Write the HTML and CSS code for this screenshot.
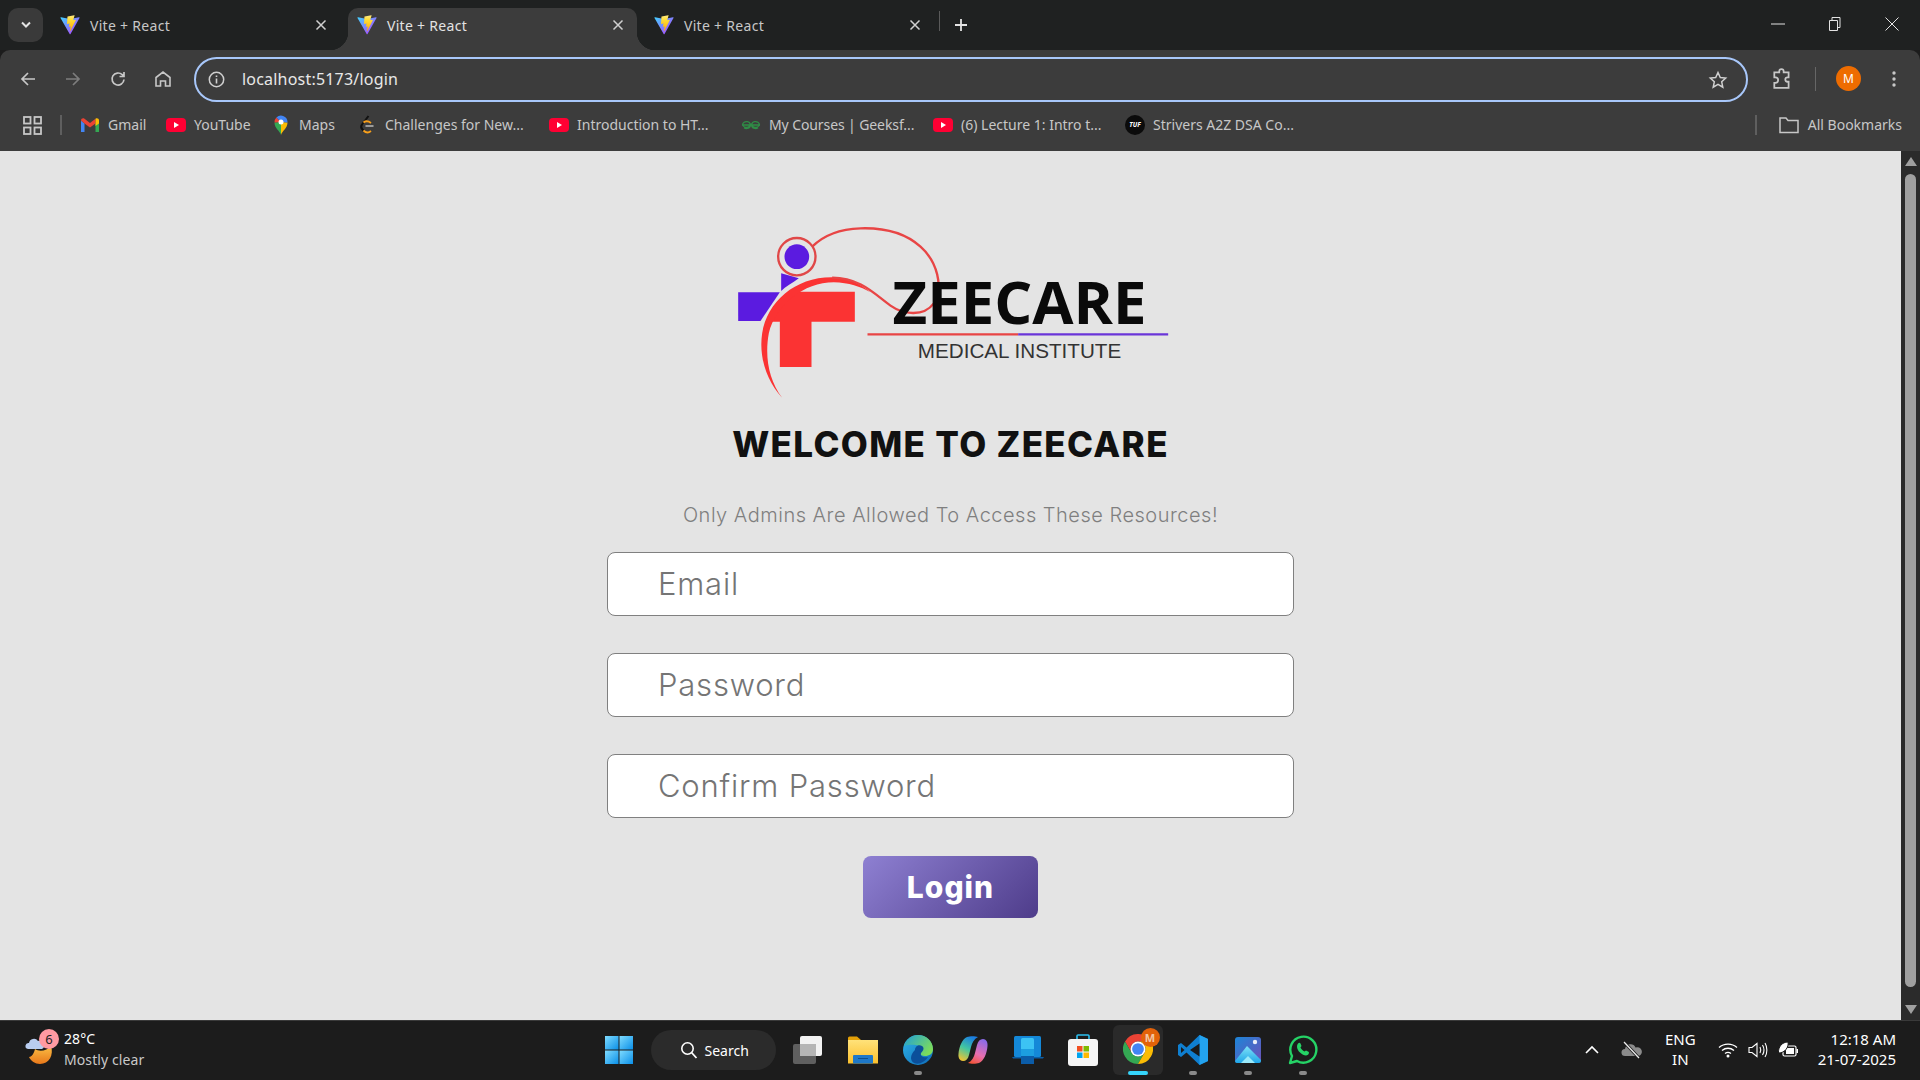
FILE: index.html
```html
<!DOCTYPE html>
<html>
<head>
  <title>Vite + React</title>
  <link rel="stylesheet" href="styles.css">
</head>
<body>
  <svg class="icon-defs" xmlns="http://www.w3.org/2000/svg">
    <defs>
      <linearGradient id="vitePurple" x1="0" y1="0" x2="1" y2="1"><stop offset="0" stop-color="#41d1ff"/><stop offset="1" stop-color="#bd34fe"/></linearGradient>
      <linearGradient id="viteYellow" x1="0" y1="0" x2="0" y2="1"><stop offset="0" stop-color="#ffea83"/><stop offset="0.3" stop-color="#ffdd35"/><stop offset="1" stop-color="#ffa800"/></linearGradient>
      <linearGradient id="startBlue" x1="0" y1="0" x2="1" y2="1"><stop offset="0" stop-color="#7fdcff"/><stop offset="1" stop-color="#0a8fe8"/></linearGradient>
      <linearGradient id="edgeBlue" x1="0" y1="0" x2="1" y2="1"><stop offset="0" stop-color="#2fb4e8"/><stop offset="1" stop-color="#0d6ab8"/></linearGradient>
      <linearGradient id="edgeGreen" x1="0" y1="0" x2="1" y2="0.6"><stop offset="0" stop-color="#1f9fd8"/><stop offset="1" stop-color="#7ddc5a"/></linearGradient>
      <linearGradient id="copilotA" x1="0.6" y1="0" x2="0.2" y2="1"><stop offset="0" stop-color="#1b7ee0"/><stop offset="0.5" stop-color="#43c7a0"/><stop offset="1" stop-color="#f4c330"/></linearGradient>
      <linearGradient id="copilotB" x1="0.7" y1="0" x2="0.3" y2="1"><stop offset="0" stop-color="#8b6be8"/><stop offset="0.6" stop-color="#e86fb0"/><stop offset="1" stop-color="#f2553d"/></linearGradient>
      <linearGradient id="photoBg" x1="0" y1="0" x2="1" y2="1"><stop offset="0" stop-color="#1c86d8"/><stop offset="1" stop-color="#7050b8"/></linearGradient>
      <linearGradient id="photoHill" x1="0" y1="0" x2="0" y2="1"><stop offset="0" stop-color="#7fe3f8"/><stop offset="1" stop-color="#1fa5e8"/></linearGradient>
      <linearGradient id="folderFill" x1="0" y1="0" x2="0" y2="1"><stop offset="0" stop-color="#ffe27a"/><stop offset="1" stop-color="#fbc02d"/></linearGradient>
      <linearGradient id="moonFill" x1="0" y1="0" x2="0" y2="1"><stop offset="0" stop-color="#fbbf45"/><stop offset="1" stop-color="#e8781a"/></linearGradient>
      <symbol id="vite" viewBox="0 0 410 404">
        <path fill="url(#vitePurple)" d="M399.641 59.5246L215.643 388.545C211.844 395.338 202.084 395.378 198.228 388.618L10.5817 59.5563C6.38087 52.1896 12.6802 43.2665 21.0281 44.7586L205.223 77.6824C206.398 77.8924 207.601 77.8904 208.776 77.6763L389.119 44.8058C397.439 43.2894 403.768 52.1434 399.641 59.5246Z"/>
        <path fill="url(#viteYellow)" d="M292.965 1.5744L156.801 28.2552C154.563 28.6937 152.906 30.5903 152.771 32.8664L144.395 174.33C144.198 177.662 147.258 180.248 150.51 179.498L188.42 170.749C191.967 169.931 195.172 173.055 194.443 176.622L183.18 231.775C182.422 235.487 185.907 238.661 189.532 237.56L212.947 230.446C216.577 229.344 220.065 232.527 219.297 236.242L201.398 322.875C200.278 328.294 207.486 331.249 210.492 326.603L212.5 323.5L323.454 102.072C325.312 98.3645 322.108 94.137 318.036 94.9228L279.014 102.454C275.347 103.161 272.227 99.746 273.262 96.1583L298.731 7.86689C299.767 4.27314 296.636 0.855181 292.965 1.5744Z"/>
      </symbol>
      <symbol id="close" viewBox="0 0 12 12"><path d="M1.5 1.5l9 9M10.5 1.5l-9 9" fill="none" stroke="currentColor" stroke-width="1.5"/></symbol>
      <symbol id="youtube" viewBox="0 0 20 20"><rect y="3" width="20" height="14" rx="4" fill="#ff0033"/><path d="M8 7l5 3-5 3z" fill="#fff"/></symbol>
    </defs>
  </svg>

  <div class="app">
    <div class="tabstrip">
      <button class="tab-search">
        <svg width="12" height="8" viewBox="0 0 12 8"><path d="M2 1.5l4 4 4-4" fill="none" stroke="#e3e3e3" stroke-width="2"/></svg>
      </button>
      <div class="tab">
        <svg class="favicon"><use href="#vite"/></svg>
        <span class="tab-title">Vite + React</span>
        <svg class="tab-close"><use href="#close"/></svg>
      </div>
      <div class="tab active">
        <svg class="favicon"><use href="#vite"/></svg>
        <span class="tab-title">Vite + React</span>
        <svg class="tab-close"><use href="#close"/></svg>
      </div>
      <div class="tab last">
        <svg class="favicon"><use href="#vite"/></svg>
        <span class="tab-title">Vite + React</span>
        <svg class="tab-close"><use href="#close"/></svg>
      </div>
      <div class="new-tab">
        <svg width="14" height="14" viewBox="0 0 14 14"><path d="M7 1v12M1 7h12" stroke="#e3e3e3" stroke-width="1.8"/></svg>
      </div>
      <div class="window-controls">
        <div class="win-btn"><svg width="14" height="14" viewBox="0 0 14 14"><path d="M0 7h14" stroke="#e3e3e3"/></svg></div>
        <div class="win-btn"><svg width="14" height="16" viewBox="0 0 14 16"><path d="M1.5 4.5h8v10h-8zM4 4.5V1.5h8v10h-2.5" fill="none" stroke="#e3e3e3"/></svg></div>
        <div class="win-btn"><svg width="14" height="14" viewBox="0 0 14 14"><path d="M.5.5l13 13M13.5.5l-13 13" stroke="#e3e3e3"/></svg></div>
      </div>
    </div>

    <div class="toolbar">
      <div class="nav-btn"><svg width="18" height="18" viewBox="0 0 18 18"><path d="M16 9H3M9 3L3 9l6 6" fill="none" stroke="#c7c7c7" stroke-width="1.7"/></svg></div>
      <div class="nav-btn"><svg width="18" height="18" viewBox="0 0 18 18"><path d="M2 9h13M9 3l6 6-6 6" fill="none" stroke="#7d7d7d" stroke-width="1.7"/></svg></div>
      <div class="nav-btn"><svg width="18" height="18" viewBox="0 0 18 18"><path d="M15 9.5A6 6 0 1 1 13.2 4.7L15 6.5M15 2v4.5h-4.5" fill="none" stroke="#c7c7c7" stroke-width="1.7"/></svg></div>
      <div class="nav-btn"><svg width="18" height="18" viewBox="0 0 18 18"><path d="M2 16V7.5L9 2l7 5.5V16h-4.5v-5h-5v5z" fill="none" stroke="#c7c7c7" stroke-width="1.6"/></svg></div>
      <div class="omnibox">
        <svg class="omni-info" width="17" height="17" viewBox="0 0 17 17"><circle cx="8.5" cy="8.5" r="7.2" fill="none" stroke="#d0d0d0" stroke-width="1.5"/><path d="M8.5 7.5v5M8.5 4.5v1.6" stroke="#d0d0d0" stroke-width="1.6"/></svg>
        <span class="omni-url">localhost:5173/login</span>
        <svg width="20" height="20" viewBox="0 0 20 20"><path d="M10 2.5l2.3 5 5.4.6-4 3.7 1.1 5.4-4.8-2.8-4.8 2.8 1.1-5.4-4-3.7 5.4-.6z" fill="none" stroke="#d0d0d0" stroke-width="1.5"/></svg>
      </div>
      <div class="toolbar-right">
        <svg class="ext-icon" width="22" height="22" viewBox="0 0 20 20"><path d="M3 4h4.500V3a2 2 0 0 1 4 0v1H16v4.500h-1a2 2 0 0 0 0 4h1V18H3v-4.500h1a2.500 2.500 0 0 0 0-5H3z" fill="none" stroke="#c7c7c7" stroke-width="1.6"/></svg>
        <span class="toolbar-sep"></span>
        <span class="avatar">M</span>
        <svg class="menu-icon" width="4" height="18" viewBox="0 0 4 18"><circle cx="2" cy="3" r="1.7" fill="#c7c7c7"/><circle cx="2" cy="9" r="1.7" fill="#c7c7c7"/><circle cx="2" cy="15" r="1.7" fill="#c7c7c7"/></svg>
      </div>
    </div>

    <div class="bookmarks">
      <svg class="apps-icon" width="19" height="19" viewBox="0 0 19 19"><g fill="none" stroke="#c7c7c7" stroke-width="1.8"><rect x="1" y="1" width="6.5" height="6.5"/><rect x="11.5" y="1" width="6.5" height="6.5"/><rect x="1" y="11.5" width="6.5" height="6.5"/><rect x="11.5" y="11.5" width="6.5" height="6.5"/></g></svg>
      <span class="bookmark-sep"></span>
      <div class="bookmark gmail">
        <svg class="bm-icon" viewBox="0 0 20 20"><path d="M1 5.5V17h3.500V8.500z" fill="#4285f4"/><path d="M19 5.5V17h-3.500V8.500z" fill="#34a853"/><path d="M1 5.500C1 3.500 3 2.600 4.500 3.700L10 8l5.500-4.300L15.500 8.500 10 12.500 4.500 8.500z" fill="#ea4335"/><path d="M15.500 3.700C17 2.600 19 3.500 19 5.500v3l-3.500 2.500z" fill="#fbbc04"/></svg>
        <span>Gmail</span>
      </div>
      <div class="bookmark yt">
        <svg class="bm-icon"><use href="#youtube"/></svg>
        <span>YouTube</span>
      </div>
      <div class="bookmark maps">
        <svg class="bm-icon maps-icon" viewBox="3 0 14 20"><path d="M10 20c-1-4-6.500-6.500-6.500-12.500L10 7z" fill="#34a853"/><path d="M10 20c1-4 6.500-6.500 6.500-12.500L10 7z" fill="#fbbc04"/><path d="M3.500 7.500A6.500 6.500 0 0 1 5.400 2.500L10 7z" fill="#ea4335"/><path d="M5.400 2.500A6.500 6.500 0 0 1 16.500 7.500L10 7z" fill="#4285f4"/><circle cx="10" cy="7" r="2.500" fill="#fff"/></svg>
        <span>Maps</span>
      </div>
      <div class="bookmark long">
        <svg class="bm-icon" viewBox="0 0 20 20"><path d="M11.500 1L5 9.500c-1.200 1.600-1 3.500.5 5l1 1" fill="none" stroke="#111" stroke-width="2"/><path d="M6.500 15.500c2 2 5 2.500 7.500.5M6.500 7.500c2-1.500 5-1.500 7.500.5" fill="none" stroke="#f89f1b" stroke-width="1.8"/><path d="M8.500 11h8" stroke="#b3b3b3" stroke-width="1.6"/></svg>
        <span>Challenges for New...</span>
      </div>
      <div class="bookmark long">
        <svg class="bm-icon"><use href="#youtube"/></svg>
        <span>Introduction to HT...</span>
      </div>
      <div class="bookmark long">
        <svg class="bm-icon" viewBox="0 0 20 20"><path d="M1 10h18M1.500 10a4 3.500 0 1 1 1.500 2.800M18.500 10a4 3.500 0 1 0-1.500 2.800M1.800 10.500a4 3.500 0 0 0 7 0M18.200 10.500a4 3.500 0 0 1-7 0" fill="none" stroke="#2f8d46" stroke-width="1.3"/></svg>
        <span class="tight">My Courses | Geeksf...</span>
      </div>
      <div class="bookmark long">
        <svg class="bm-icon"><use href="#youtube"/></svg>
        <span>(6) Lecture 1: Intro t...</span>
      </div>
      <div class="bookmark long">
        <svg class="bm-icon" viewBox="0 0 20 20"><circle cx="10" cy="10" r="10" fill="#0b0b0b"/><text x="10" y="12" class="tuf-text">TUF</text></svg>
        <span>Strivers A2Z DSA Co...</span>
      </div>
      <div class="bookmarks-end">
        <span class="bookmark-sep"></span>
        <svg class="folder-icon" width="20" height="18" viewBox="0 0 20 18"><path d="M1 2h6l2 2.500h10V16.500H1z" fill="none" stroke="#c7c7c7" stroke-width="1.5"/></svg>
        <span>All Bookmarks</span>
      </div>
    </div>

    <div class="viewport">
      <div class="page">
        <svg class="logo" viewBox="-28.5 0 1440 600">
          <path class="logo-purple" d="M53 232H178L120 318H53z"/>
          <path class="logo-purple" d="M182 175L235 190C215 205 195 215 182 228z"/>
          <path class="logo-redfill" d="M235 230H403V320H273V456H178V320H150C160 290 190 250 235 230z"/>
          <path class="logo-redfill" d="M185 548C135 495 115 420 125 355C140 260 225 186 335 187C385 188 420 208 450 232C420 215 385 203 340 202C250 202 165 270 145 355C132 425 145 495 185 548z"/>
          <path class="logo-line" d="M335 188C420 188 465 240 510 272C550 300 610 305 640 265C670 215 650 140 600 95C550 50 480 38 420 40C360 42 310 60 275 95"/>
          <circle class="logo-ring" cx="229" cy="125" r="56"/>
          <circle class="logo-purple" cx="229" cy="125" r="37"/>
          <text class="logo-name" x="516" y="328" textLength="762" lengthAdjust="spacingAndGlyphs">ZEECARE</text>
          <path class="logo-rule-red" d="M441 358H893"/>
          <path class="logo-rule-purple" d="M893 358H1343"/>
          <text class="logo-sub" x="592" y="430" textLength="610" lengthAdjust="spacingAndGlyphs">MEDICAL INSTITUTE</text>
        </svg>
        <h1 class="welcome">WELCOME TO ZEECARE</h1>
        <p class="notice">Only Admins Are Allowed To Access These Resources!</p>
        <form class="login-form">
          <input class="field" type="text" placeholder="Email">
          <input class="field" type="password" placeholder="Password">
          <input class="field" type="password" placeholder="Confirm Password">
          <button class="login-btn" type="button">Login</button>
        </form>
      </div>
      <div class="scrollbar">
        <span class="arrow-up"></span>
        <span class="thumb"></span>
        <span class="arrow-down"></span>
      </div>
    </div>

    <div class="taskbar">
      <div class="weather">
        <div class="weather-icon">
          <svg width="32" height="36" viewBox="0 0 32 36"><path d="M10 18c4 3 12 2 16-3 3 9-2 18-11 18-5 0-9-3-11-7 3 0 5-4 6-8z" fill="url(#moonFill)"/><path d="M3 18a3 3 0 0 1 1-6 5 5 0 0 1 9-2 4 4 0 0 1 4 8z" fill="#b9cdf0"/></svg>
          <span class="weather-badge">6</span>
        </div>
        <div class="weather-text">
          <span class="temp">28°C</span>
          <span class="cond">Mostly clear</span>
        </div>
      </div>

      <div class="task-center">
        <div class="task-item">
          <svg width="30" height="30" viewBox="0 0 30 30"><rect x="1" y="1" width="13.5" height="13.5" fill="url(#startBlue)"/><rect x="15.5" y="1" width="13.5" height="13.5" fill="url(#startBlue)"/><rect x="1" y="15.5" width="13.5" height="13.5" fill="url(#startBlue)"/><rect x="15.5" y="15.5" width="13.5" height="13.5" fill="url(#startBlue)"/></svg>
        </div>
        <div class="task-search">
          <svg width="18" height="18" viewBox="0 0 18 18"><circle cx="7.5" cy="7.5" r="5.7" fill="none" stroke="#fff" stroke-width="1.6"/><path d="M11.5 11.5l5 5.5" stroke="#fff" stroke-width="1.8"/></svg>
          <span>Search</span>
        </div>
        <div class="task-item">
          <svg width="32" height="30" viewBox="0 0 32 30"><rect x="1" y="9" width="23" height="20" rx="2" fill="#5f5f5f"/><rect x="8" y="1" width="22" height="20" rx="2" fill="#f2f2f2"/><rect x="8" y="9" width="16" height="12" fill="#b5b5b5"/></svg>
        </div>
        <div class="task-item">
          <svg width="30" height="28" viewBox="0 0 30 28"><path d="M0 2a1.5 1.5 0 0 1 1.5-1.5H9L13 4h-13z" fill="#e3a008"/><path d="M0 4h30v23.500H0z" fill="url(#folderFill)"/><rect x="5" y="19" width="20" height="8.5" rx="1" fill="#1e78c8"/><path d="M10 22.500h10" stroke="#0c4f8f"/></svg>
        </div>
        <div class="task-item has-dot">
          <svg width="30" height="30" viewBox="0 0 30 30"><circle cx="15" cy="15" r="15" fill="url(#edgeBlue)"/><path d="M1 11C3 4 9 0 15 0c8 0 15 6 15 14 0 5-4 7-8 7-3 0-5-1-5-3 2-2 3-5-1-7-5-2-11-1-15 0z" fill="url(#edgeGreen)"/><path d="M12 15c0-3 3-6 7-4 3 2 1 5-1 7-1 3 2 5 7 4-3 5-9 8-14 6-5-3-3-9 1-13z" fill="#0b4f9a"/></svg>
          <span class="task-dot"></span>
        </div>
        <div class="task-item">
          <svg width="30" height="28" viewBox="0 0 30 28"><path d="M9 1C12 0 17 0 20 1C16 3 14 7 13 11L11 19C10 23 8 25 5 25C2 25 0 22 .5 18C1 11 4 3 9 1z" fill="url(#copilotA)"/><path d="M21 27C18 28 13 28 10 27C14 25 16 21 17 17L19 9C20 5 22 3 25 3C28 3 30 6 29.5 10C29 17 26 25 21 27z" fill="url(#copilotB)"/></svg>
        </div>
        <div class="task-item">
          <svg width="32" height="28" viewBox="0 0 32 28"><rect x="2" y="0" width="27" height="21" rx="1.5" fill="#1488d8"/><path d="M0 21h32l-1 1.500H1z" fill="#0a5ea8"/><rect x="9" y="2" width="13" height="26" rx="1.5" fill="#3cc3f4"/><rect x="9" y="13" width="13" height="7" fill="#1c9ee0"/><rect x="9" y="20" width="13" height="8" fill="#0b5ca8"/></svg>
        </div>
        <div class="task-item">
          <svg width="30" height="32" viewBox="0 0 30 32"><path d="M9 5V2a1 1 0 0 1 1-1h10a1 1 0 0 1 1 1v3" fill="none" stroke="#2cc0f0" stroke-width="1.6"/><rect y="5" width="30" height="27" rx="3" fill="#f5f5f5"/><rect x="9" y="12" width="5.5" height="5.5" fill="#f25022"/><rect x="15.5" y="12" width="5.5" height="5.5" fill="#7fba00"/><rect x="9" y="18.5" width="5.5" height="5.5" fill="#00a4ef"/><rect x="15.5" y="18.5" width="5.5" height="5.5" fill="#ffb900"/></svg>
        </div>
        <div class="task-item current has-dot">
          <div class="chrome-wrap">
            <svg width="30" height="30" viewBox="1 1 22 22"><path d="M21.530 6.500H12A5.500 5.500 0 0 0 7.240 14.750L2.470 6.500A11 11 0 0 1 21.530 6.500z" fill="#ea4335"/><path d="M2.470 6.500L7.240 14.750A5.500 5.500 0 0 0 16.760 14.750L12 23A11 11 0 0 1 2.470 6.500z" fill="#34a853"/><path d="M12 23L16.760 14.750A5.500 5.500 0 0 0 12 6.500H21.530A11 11 0 0 1 12 23z" fill="#fbbc04"/><circle cx="12" cy="12" r="5.5" fill="#fff"/><circle cx="12" cy="12" r="4.3" fill="#4285f4"/></svg>
            <span class="chrome-badge">M</span>
          </div>
          <span class="task-dot"></span>
        </div>
        <div class="task-item has-dot">
          <svg width="30" height="30" viewBox="0 0 30 30"><path d="M21.500 0L30 4v22l-8.500 4-13-12.500L3 22 0 20V10l3-2 5.500 4.500z" fill="#0f7fd0"/><path d="M21.500 0L30 4v22l-8.500 4z" fill="#23a3ef"/><path d="M21.500 8.500L12 15l9.500 6.500z" fill="#1a1a1a"/><path d="M3 12l3.500 3L3 18z" fill="#1a1a1a"/></svg>
          <span class="task-dot"></span>
        </div>
        <div class="task-item has-dot">
          <svg width="26" height="26" viewBox="0 0 26 26"><rect width="26" height="26" rx="3" fill="url(#photoBg)"/><path d="M0 24L12 9l14 14v1a2 2 0 0 1-2 2H2a2 2 0 0 1-2-2z" fill="url(#photoHill)"/><path d="M6 26l7-7 7 7z" fill="#9aeafa"/><circle cx="20" cy="5" r="2.2" fill="#e8eef8"/></svg>
          <span class="task-dot"></span>
        </div>
        <div class="task-item has-dot">
          <svg width="30" height="30" viewBox="0 0 30 30"><path d="M2 28l2-7A13 13 0 1 1 9 26z" fill="none" stroke="#25d366" stroke-width="2.4" stroke-linejoin="round"/><path d="M10 8.500c1-1 2-1 2.500 0l1 2.500-1 1.500c.8 1.800 2.200 3 4 4l1.500-1 2.500 1.200c.8.500.5 2-.5 3-2 1.500-5 .5-8-2.200-3-2.800-3.800-6.500-2-9z" fill="#25d366"/></svg>
          <span class="task-dot"></span>
        </div>
      </div>

      <div class="tray">
        <svg class="tray-chevron" width="16" height="10" viewBox="0 0 16 10"><path d="M2 8l6-6 6 6" fill="none" stroke="#fff" stroke-width="1.6"/></svg>
        <svg class="tray-cloud" width="22" height="18" viewBox="0 0 22 18"><path d="M4 15a3.500 3.500 0 0 1 0-7 5.500 5.500 0 0 1 10.500-1.500A4.300 4.300 0 0 1 18 15z" fill="#8b8b8b"/><path d="M3 1l15 16" stroke="#1c1c1c" stroke-width="3"/><path d="M3 1l15 16" stroke="#eee" stroke-width="1.2"/></svg>
        <div class="tray-lang"><span>ENG</span><span>IN</span></div>
        <svg class="tray-wifi" width="20" height="16" viewBox="0 0 20 16"><path d="M1 5.500c5-4.500 13-4.500 18 0M4 8.500c3.500-3 8.500-3 12 0M7 11.500c2-1.500 4-1.500 6 0" fill="none" stroke="#fff" stroke-width="1.3"/><circle cx="10" cy="14" r="1.5" fill="#fff"/></svg>
        <svg class="tray-sound" width="20" height="16" viewBox="0 0 20 16"><path d="M1 5.500h3L9 1.500v13L4 10.500H1z" fill="none" stroke="#fff" stroke-width="1.1"/><path d="M12 5c1 2 1 4 0 6M14.500 3c1.800 3 1.800 7 0 10M17 1c2.500 4 2.500 10 0 14" fill="none" stroke="#fff" stroke-width="1.1"/></svg>
        <svg class="tray-battery" width="20" height="16" viewBox="0 0 20 16"><rect x="5" y="4" width="13" height="10" rx="1.5" fill="none" stroke="#fff" stroke-width="1.2"/><rect x="8" y="6" width="8" height="6" fill="#fff"/><path d="M18.500 7H20v4h-1.500z" fill="#fff"/><path d="M.5 11C0 5 4 0 10 0c1 5-3 11-9.500 11z" fill="#fff" stroke="#1c1c1c"/></svg>
        <div class="tray-clock"><span>12:18 AM</span><span>21-07-2025</span></div>
      </div>
    </div>
  </div>
</body>
</html>
```

FILE: styles.css
```css
* {
  box-sizing: border-box;
}

html, body {
  margin: 0;
  height: 100%;
  overflow: hidden;
}

body {
  font-family: "Noto Sans", "Open Sans", sans-serif;
  background-color: #1c1c1c;
}

.icon-defs {
  display: block;
  width: 0;
  height: 0;
}

.app {
  display: flex;
  flex-direction: column;
  height: 1080px;
}

/* browser tabs */
.tabstrip {
  display: flex;
  align-items: flex-end;
  height: 50px;
  padding-left: 8px;
  background-color: #1f2121;
}

.tab-search {
  display: flex;
  align-items: center;
  justify-content: center;
  align-self: flex-start;
  width: 35px;
  height: 34px;
  margin-top: 8px;
  margin-right: 8px;
  padding: 0;
  border: none;
  border-radius: 10px;
  background-color: #3a3a3a;
}

.tab {
  position: relative;
  display: flex;
  align-items: center;
  flex: none;
  width: 297px;
  height: 42px;
  padding: 0 21px 8px 9px;
  color: #c7c7c7;
  font-size: 14px;
  letter-spacing: .3px;
}

.tab.active {
  width: 289px;
  margin-right: 8px;
  padding-right: 13px;
  color: #e3e3e3;
  background-color: #3c3c3c;
  border-radius: 10px 10px 0 0;
}

.tab.active::before,
.tab.active::after {
  content: "";
  position: absolute;
  bottom: 0;
  width: 18px;
  height: 18px;
}

.tab.active::before {
  left: -18px;
  background: radial-gradient(circle at 0 0, transparent 18px, #3c3c3c 18.5px);
}

.tab.active::after {
  right: -18px;
  background: radial-gradient(circle at 100% 0, transparent 18px, #3c3c3c 18.5px);
}

.tab.last::after {
  content: "";
  position: absolute;
  right: 2px;
  top: 3px;
  width: 1px;
  height: 20px;
  background-color: #5a5a5a;
}

.favicon {
  flex: none;
  width: 20px;
  height: 20px;
  margin-right: 10px;
}

.tab-title {
  flex: 1;
}

.tab-close {
  flex: none;
  width: 12px;
  height: 12px;
  color: #d0d0d0;
}

.new-tab {
  display: flex;
  align-items: center;
  justify-content: center;
  width: 28px;
  height: 42px;
  padding-bottom: 8px;
  margin-left: 5px;
}

.window-controls {
  display: flex;
  align-self: flex-start;
  margin-left: auto;
}

.win-btn {
  display: flex;
  align-items: center;
  justify-content: center;
  width: 57px;
  height: 48px;
}

/* address bar */
.toolbar {
  display: flex;
  align-items: flex-start;
  height: 57px;
  padding: 7px 0 0 5px;
  background-color: #3c3c3c;
  border-radius: 10px 10px 0 0;
}

.nav-btn {
  display: flex;
  align-items: center;
  justify-content: center;
  width: 45px;
  height: 43px;
}

.omnibox {
  display: flex;
  align-items: center;
  width: 1554px;
  height: 45px;
  margin-left: 9px;
  padding: 0 18px 0 12px;
  border: 2.5px solid #a8c7fa;
  border-radius: 23px;
}

.omni-info {
  margin-right: 17px;
}

.omni-url {
  flex: 1;
  padding-bottom: 1px;
  color: #e8e8e8;
  font-size: 16px;
  letter-spacing: .2px;
}

.toolbar-right {
  display: flex;
  align-items: center;
  height: 43px;
}

.ext-icon {
  margin-left: 23px;
}

.toolbar-sep {
  width: 1px;
  height: 24px;
  margin-left: 22px;
  background-color: #666;
}

.avatar {
  display: flex;
  align-items: center;
  justify-content: center;
  width: 25px;
  height: 25px;
  margin-left: 20px;
  border-radius: 50%;
  background-color: #ee6c00;
  color: #fff;
  font-size: 12px;
}

.menu-icon {
  margin-left: 31px;
}

/* bookmarks */
.bookmarks {
  display: flex;
  align-items: center;
  height: 44px;
  padding: 0 18px 8px 23px;
  background-color: #3c3c3c;
  color: #c7c7c7;
  font-size: 14px;
  white-space: nowrap;
}

.bookmarks span:not(.bookmark-sep) {
  margin-top: -2px;
}

.bookmark-sep {
  width: 2px;
  height: 20px;
  margin-left: 18px;
  background-color: #5f5f5f;
}

.bookmark {
  display: flex;
  align-items: center;
  flex: none;
}

.bm-icon {
  flex: none;
  width: 20px;
  height: 20px;
  margin-right: 8px;
}

.gmail {
  width: 86px;
  margin-left: 18px;
}

.yt {
  width: 108px;
}

.maps {
  width: 83px;
}

.maps-icon {
  width: 14px;
  margin-right: 11px;
}

.long {
  width: 192px;
}

.bookmark .tight {
  letter-spacing: -.1px;
}

.tuf-text {
  fill: #fff;
  font-size: 6.5px;
  font-weight: 700;
  font-style: italic;
  text-anchor: middle;
}

.bookmarks-end {
  display: flex;
  align-items: center;
  margin-left: auto;
}

.folder-icon {
  margin: 0 9px 0 22px;
}

/* page */
.viewport {
  display: flex;
  flex: 1;
  min-height: 0;
}

.page {
  display: flex;
  flex-direction: column;
  align-items: center;
  flex: 1;
  padding-top: 64px;
  background-color: #e4e4e4;
}

.logo {
  display: block;
  flex: none;
  width: 480px;
  height: 200px;
}

.logo-purple {
  fill: #5b1be0;
}

.logo-redfill {
  fill: #fb3333;
}

.logo-line {
  fill: none;
  stroke: #e84545;
  stroke-width: 7;
}

.logo-ring {
  fill: none;
  stroke: #e04848;
  stroke-width: 7;
}

.logo-name {
  fill: #0a0a0a;
  font-family: "Open Sans", sans-serif;
  font-size: 176px;
  font-weight: 700;
}

.logo-sub {
  fill: #333;
  font-family: "Liberation Sans", sans-serif;
  font-size: 61px;
}

.logo-rule-red {
  stroke: #e84545;
  stroke-width: 7;
}

.logo-rule-purple {
  stroke: #6a35d8;
  stroke-width: 7;
}

.welcome {
  margin: 8px 0 0;
  color: #111;
  font-family: "Inter", sans-serif;
  font-size: 35px;
  font-weight: 800;
  letter-spacing: 1.35px;
  line-height: 42px;
  white-space: nowrap;
}

.notice {
  margin: 37px 0 0;
  color: #7f7f7f;
  font-family: "Inter", sans-serif;
  font-size: 20px;
  font-weight: 300;
  letter-spacing: .5px;
  line-height: 26px;
}

.login-form {
  display: flex;
  flex-direction: column;
  align-items: center;
  gap: 37.2px;
  width: 687px;
  margin-top: 24px;
}

.field {
  width: 100%;
  height: 64px;
  padding: 0 50px 2px;
  border: 1px solid #808080;
  border-radius: 8px;
  background-color: #fff;
  font-family: "Inter", sans-serif;
  font-size: 31px;
  font-weight: 300;
  letter-spacing: .8px;
}

.field::placeholder {
  color: #757575;
  opacity: 1;
}

.login-btn {
  width: 175px;
  height: 62px;
  border: none;
  border-radius: 8px;
  background: linear-gradient(135deg, #8e80d2, #4e3c8a);
  color: #fff;
  font-family: "Inter", sans-serif;
  font-size: 30px;
  font-weight: 800;
  letter-spacing: 1px;
}

.scrollbar {
  display: flex;
  flex-direction: column;
  align-items: center;
  flex: none;
  width: 19px;
  padding: 6px 0;
  background-color: #2b2b2b;
}

.arrow-up,
.arrow-down {
  flex: none;
  width: 0;
  height: 0;
  border-left: 6.5px solid transparent;
  border-right: 6.5px solid transparent;
}

.arrow-up {
  border-bottom: 9px solid #a0a0a0;
}

.arrow-down {
  border-top: 9px solid #a0a0a0;
}

.thumb {
  flex: 1;
  width: 11px;
  margin: 8px 0 18px;
  border-radius: 6px;
  background-color: #a0a0a0;
}

/* windows taskbar */
.taskbar {
  display: grid;
  grid-template-columns: 1fr auto 1fr;
  align-items: center;
  flex: none;
  height: 60px;
  border-top: 1px solid #3a3a3a;
  background-color: #1c1c1c;
  color: #fff;
}

.weather {
  display: flex;
  align-items: center;
  padding-left: 25px;
  padding-bottom: 3px;
}

.weather-icon {
  position: relative;
  width: 39px;
  height: 36px;
}

.weather-badge {
  position: absolute;
  left: 14px;
  top: -2px;
  width: 20px;
  height: 20px;
  border-radius: 50%;
  background-color: #ff9aa2;
  color: #222;
  font-size: 13px;
  line-height: 20px;
  text-align: center;
}

.weather-text {
  display: flex;
  flex-direction: column;
  font-size: 14px;
  letter-spacing: .1px;
  line-height: 21px;
}

.cond {
  color: #c9c9c9;
}

.task-center {
  display: flex;
  align-items: center;
  gap: 5px;
  margin-left: 1px;
  margin-bottom: 1px;
}

.task-item {
  position: relative;
  display: flex;
  align-items: center;
  justify-content: center;
  width: 50px;
  height: 50px;
  border-radius: 6px;
}

.task-item.current {
  background-color: #2a2a2a;
}

.task-dot {
  position: absolute;
  left: 50%;
  bottom: 0;
  width: 8px;
  height: 4px;
  margin-left: -4px;
  border-radius: 2px;
  background-color: #8a8a8a;
}

.current .task-dot {
  width: 20px;
  margin-left: -10px;
  background-color: #35d4fa;
}

.task-search {
  display: flex;
  align-items: center;
  gap: 7px;
  width: 125px;
  height: 40px;
  margin: 0 2px;
  padding-left: 29px;
  border-radius: 20px;
  background-color: #2b2b2b;
  font-size: 14px;
}

.chrome-wrap {
  position: relative;
  display: flex;
  width: 30px;
  height: 30px;
  margin-top: -2px;
}

.chrome-badge {
  position: absolute;
  right: -7px;
  top: -6px;
  width: 19px;
  height: 19px;
  border-radius: 50%;
  background-color: #e36209;
  color: #f4c7a4;
  font-size: 11px;
  font-weight: 700;
  line-height: 19px;
  text-align: center;
}

.tray {
  display: flex;
  align-items: center;
  justify-content: flex-end;
  padding-right: 24px;
  padding-bottom: 3px;
  font-size: 15px;
}

.tray-chevron,
.tray-cloud,
.tray-wifi,
.tray-sound,
.tray-battery {
  margin-top: 1px;
}

.tray-cloud {
  margin-left: 21px;
}

.tray-lang {
  display: flex;
  flex-direction: column;
  align-items: center;
  margin-left: 22px;
  line-height: 20px;
}

.tray-wifi {
  margin-left: 22px;
}

.tray-sound {
  margin-left: 10px;
}

.tray-battery {
  margin-left: 10px;
}

.tray-clock {
  display: flex;
  flex-direction: column;
  align-items: flex-end;
  margin-left: 20px;
  line-height: 20px;
}
```
